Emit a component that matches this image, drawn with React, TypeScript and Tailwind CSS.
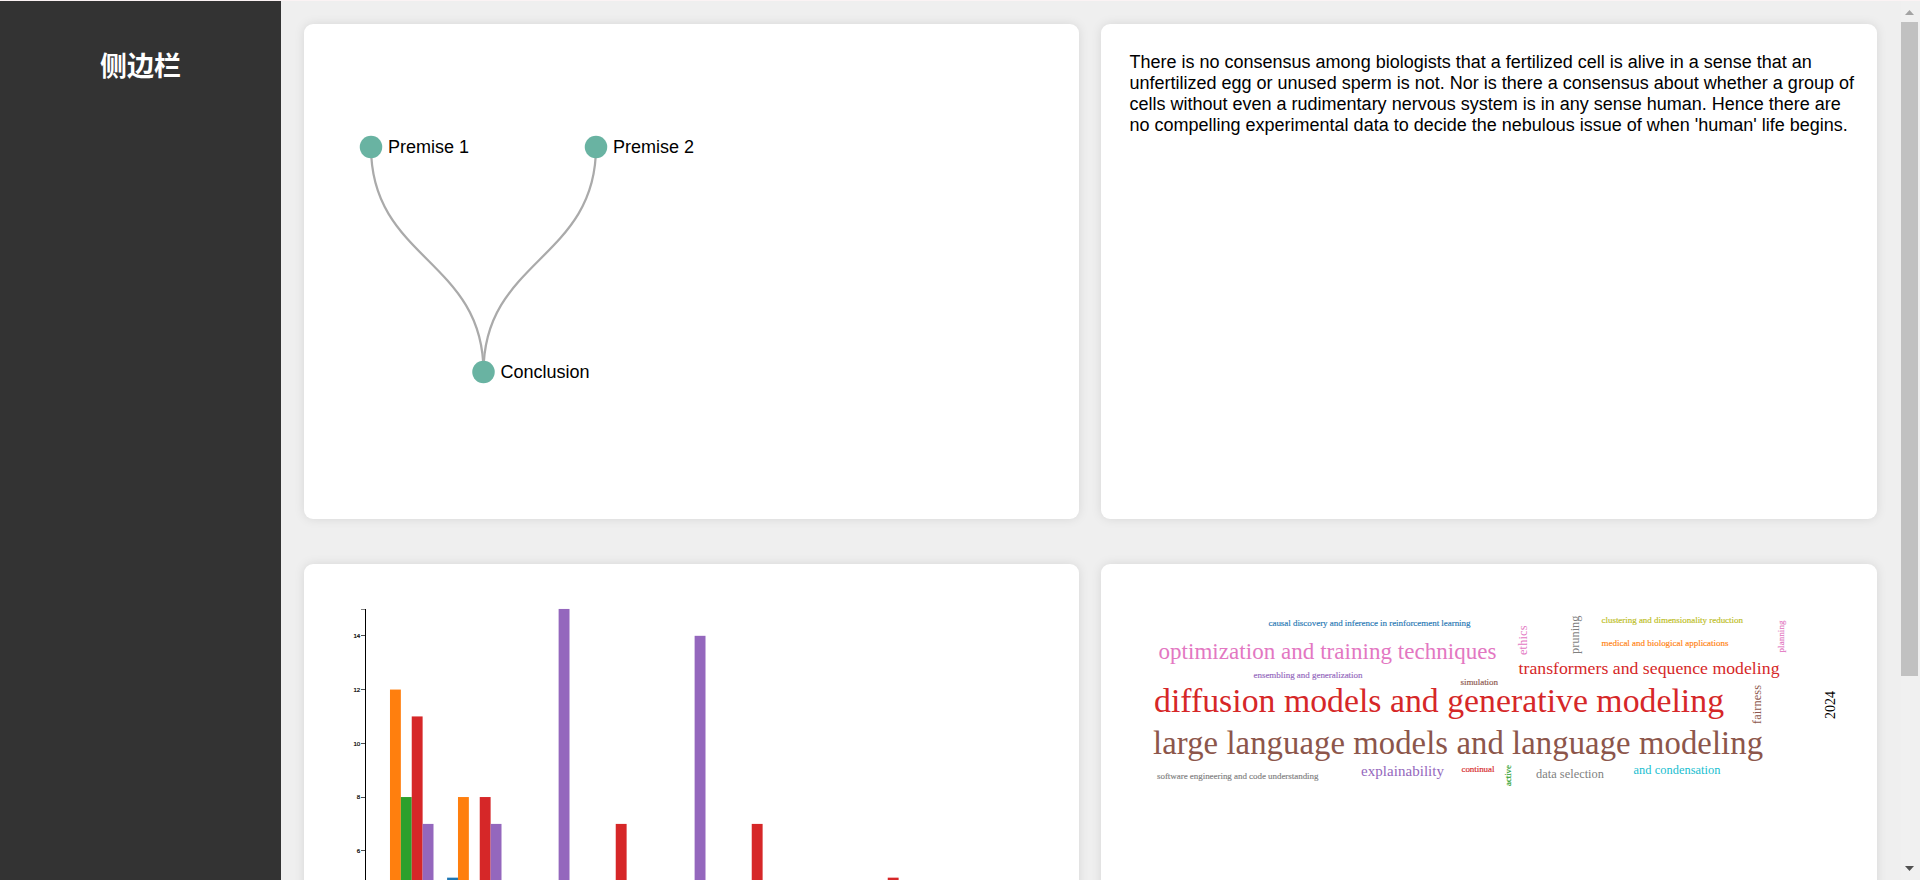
import React from "react";

const NODES = [
  { x: 371, y: 147, label: "Premise 1" },
  { x: 596, y: 147, label: "Premise 2" },
  { x: 483.5, y: 372, label: "Conclusion" },
];

const BAND = 68;
const SUB = 10.88;
const UNIT = 26.87;
const BASE = 1012;
const COLORS = ["#1f77b4", "#ff7f0e", "#2ca02c", "#d62728", "#9467bd"];
const BARS = [
  { group: 0, series: 1, value: 12 },
  { group: 0, series: 2, value: 8 },
  { group: 0, series: 3, value: 11 },
  { group: 0, series: 4, value: 7 },
  { group: 1, series: 0, value: 5 },
  { group: 1, series: 1, value: 8 },
  { group: 1, series: 3, value: 8 },
  { group: 1, series: 4, value: 7 },
  { group: 2, series: 4, value: 15 },
  { group: 3, series: 3, value: 7 },
  { group: 4, series: 4, value: 14 },
  { group: 5, series: 3, value: 7 },
  { group: 7, series: 3, value: 5 },
];

type Word = { t: string; x: number; y: number; w: number; s: number; c: string; v?: boolean };

// x/y is the start of the baseline; w is the run length along it.
const WORDS: Word[] = [
  { t: "causal discovery and inference in reinforcement learning", x: 1268.5, y: 625.5, w: 202, s: 9, c: "#1f77b4" },
  { t: "optimization and training techniques", x: 1158.5, y: 659, w: 338, s: 23, c: "#e377c2" },
  { t: "ensembling and generalization", x: 1253.5, y: 677.5, w: 109, s: 9, c: "#9467bd" },
  { t: "simulation", x: 1460.5, y: 685, w: 37.5, s: 9, c: "#8c564b" },
  { t: "diffusion models and generative modeling", x: 1154, y: 712, w: 570, s: 33.75, c: "#d62728" },
  { t: "large language models and language modeling", x: 1153, y: 754, w: 610, s: 32.7, c: "#8c564b" },
  { t: "software engineering and code understanding", x: 1157, y: 779.3, w: 161.5, s: 9, c: "#7f7f7f" },
  { t: "explainability", x: 1361, y: 775.5, w: 83, s: 15, c: "#9467bd" },
  { t: "continual", x: 1461.5, y: 772, w: 33, s: 9, c: "#d62728" },
  { t: "active", x: 1511, y: 786, w: 21, s: 9, c: "#2ca02c", v: true },
  { t: "data selection", x: 1536, y: 778, w: 68, s: 12.4, c: "#7f7f7f" },
  { t: "and condensation", x: 1633.5, y: 774, w: 87, s: 12.4, c: "#17becf" },
  { t: "transformers and sequence modeling", x: 1518.5, y: 674, w: 261, s: 17.7, c: "#d62728" },
  { t: "ethics", x: 1527, y: 655, w: 29.5, s: 12.4, c: "#e377c2", v: true },
  { t: "pruning", x: 1579, y: 654, w: 38.5, s: 12.4, c: "#7f7f7f", v: true },
  { t: "clustering and dimensionality reduction", x: 1601.5, y: 623, w: 141.5, s: 9, c: "#bcbd22" },
  { t: "medical and biological applications", x: 1601.5, y: 646, w: 127, s: 9, c: "#ff7f0e" },
  { t: "planning", x: 1784, y: 652.5, w: 32, s: 9, c: "#e377c2", v: true },
  { t: "fairness", x: 1761, y: 724, w: 39, s: 12.4, c: "#8c564b", v: true },
  { t: "2024", x: 1834.5, y: 719, w: 28, s: 14, c: "#000000", v: true },
];

function Card({ children }: { children: React.ReactNode }) {
  return (
    <section className="h-[495px] rounded-[9px] bg-white shadow-[0_0_11px_rgba(0,0,0,0.1)]">{children}</section>
  );
}

function ArgumentTree() {
  return (
    <svg viewBox="304 24 775 495" className="block h-full w-full font-['Liberation_Sans',sans-serif] text-[18px]">
      {[371, 596].map((x) => (
        <path key={x} d={`M${x} 147C${x} 259.5 483.5 259.5 483.5 372`} fill="none" stroke="#aaaaaa" strokeWidth="2.25" />
      ))}
      {NODES.map((n) => (
        <g key={n.label}>
          <circle cx={n.x} cy={n.y} r="11.25" fill="#69b3a2" />
          <text x={n.x + 16.9} y={n.y + 6}>{n.label}</text>
        </g>
      ))}
    </svg>
  );
}

function BarChart() {
  return (
    <svg viewBox="304 564 775 495" className="block h-full w-full font-['Liberation_Sans',sans-serif] text-[6.2px]">
      {BARS.map((b) => (
        <rect
          key={`${b.group}-${b.series}`}
          x={379.1 + b.group * BAND + b.series * SUB}
          y={BASE - b.value * UNIT}
          width={SUB}
          height={b.value * UNIT}
          fill={COLORS[b.series]}
        />
      ))}
      <path d="M365.5 609V1012" fill="none" stroke="#000" strokeWidth="1" />
      <path d="M361 609.5H365" stroke="#000" strokeWidth="0.5" />
      {[14, 12, 10, 8, 6].map((v) => (
        <g key={v}>
          <path d={`M361 ${Math.floor(BASE - v * UNIT) + 0.5}H365`} stroke="#000" strokeWidth="0.7" />
          <text x="360.3" y={BASE - v * UNIT + 2.4} textAnchor="end" stroke="#000" strokeWidth="0.2">{v}</text>
        </g>
      ))}
    </svg>
  );
}

function WordCloud() {
  return (
    <svg viewBox="1101 564 776 495" className="block h-full w-full font-['Liberation_Serif',serif]">
      {WORDS.map((w) => (
        <text
          key={w.t}
          transform={`translate(${w.x} ${w.y})${w.v ? " rotate(-90)" : ""}`}
          fontSize={w.s}
          fill={w.c}
          stroke={w.s < 10 ? w.c : "none"}
          strokeWidth="0.15"
          textLength={w.w}
        >
          {w.t}
        </text>
      ))}
    </svg>
  );
}

export default function App() {
  return (
    <div className="flex h-[880px] flex-col overflow-hidden border-t border-[#fbf3f4] bg-[#efefef] font-['Liberation_Sans','Noto_Sans_CJK_SC',sans-serif]">
      <div className="flex h-[879px]">
        <aside className="w-[281px] shrink-0 bg-[#333333] pt-[46px] text-center">
          <h2 className="text-[27px] leading-[40px] font-bold text-white">侧边栏</h2>
        </aside>
        <main className="grid flex-1 grid-cols-[775px_776px] content-start gap-x-[22px] gap-y-[45px] overflow-hidden pt-[23px] pl-[23px]">
          <Card><ArgumentTree /></Card>
          <Card>
            <p className="pt-[28px] pl-[28.5px] text-[18px] leading-[21px] whitespace-nowrap text-black">
              There is no consensus among biologists that a fertilized cell is alive in a sense that an<br />
              unfertilized egg or unused sperm is not. Nor is there a consensus about whether a group of<br />
              cells without even a rudimentary nervous system is in any sense human. Hence there are<br />
              no compelling experimental data to decide the nebulous issue of when 'human' life begins.
            </p>
          </Card>
          <Card><BarChart /></Card>
          <Card><WordCloud /></Card>
        </main>
        <div className="flex w-[19px] shrink-0 flex-col items-start bg-[#f0f0f0]">
          <svg viewBox="0 0 17 21" className="h-[21px] w-[17px]"><path d="M4 14L8.5 9L13 14Z" fill="#a3a3a3" /></svg>
          <div className="h-[654px] w-[17px] bg-[#c1c1c1]" />
          <div className="flex-1" />
          <svg viewBox="0 0 17 21" className="h-[21px] w-[17px]"><path d="M4 7L8.5 12L13 7Z" fill="#505050" /></svg>
        </div>
      </div>
    </div>
  );
}
